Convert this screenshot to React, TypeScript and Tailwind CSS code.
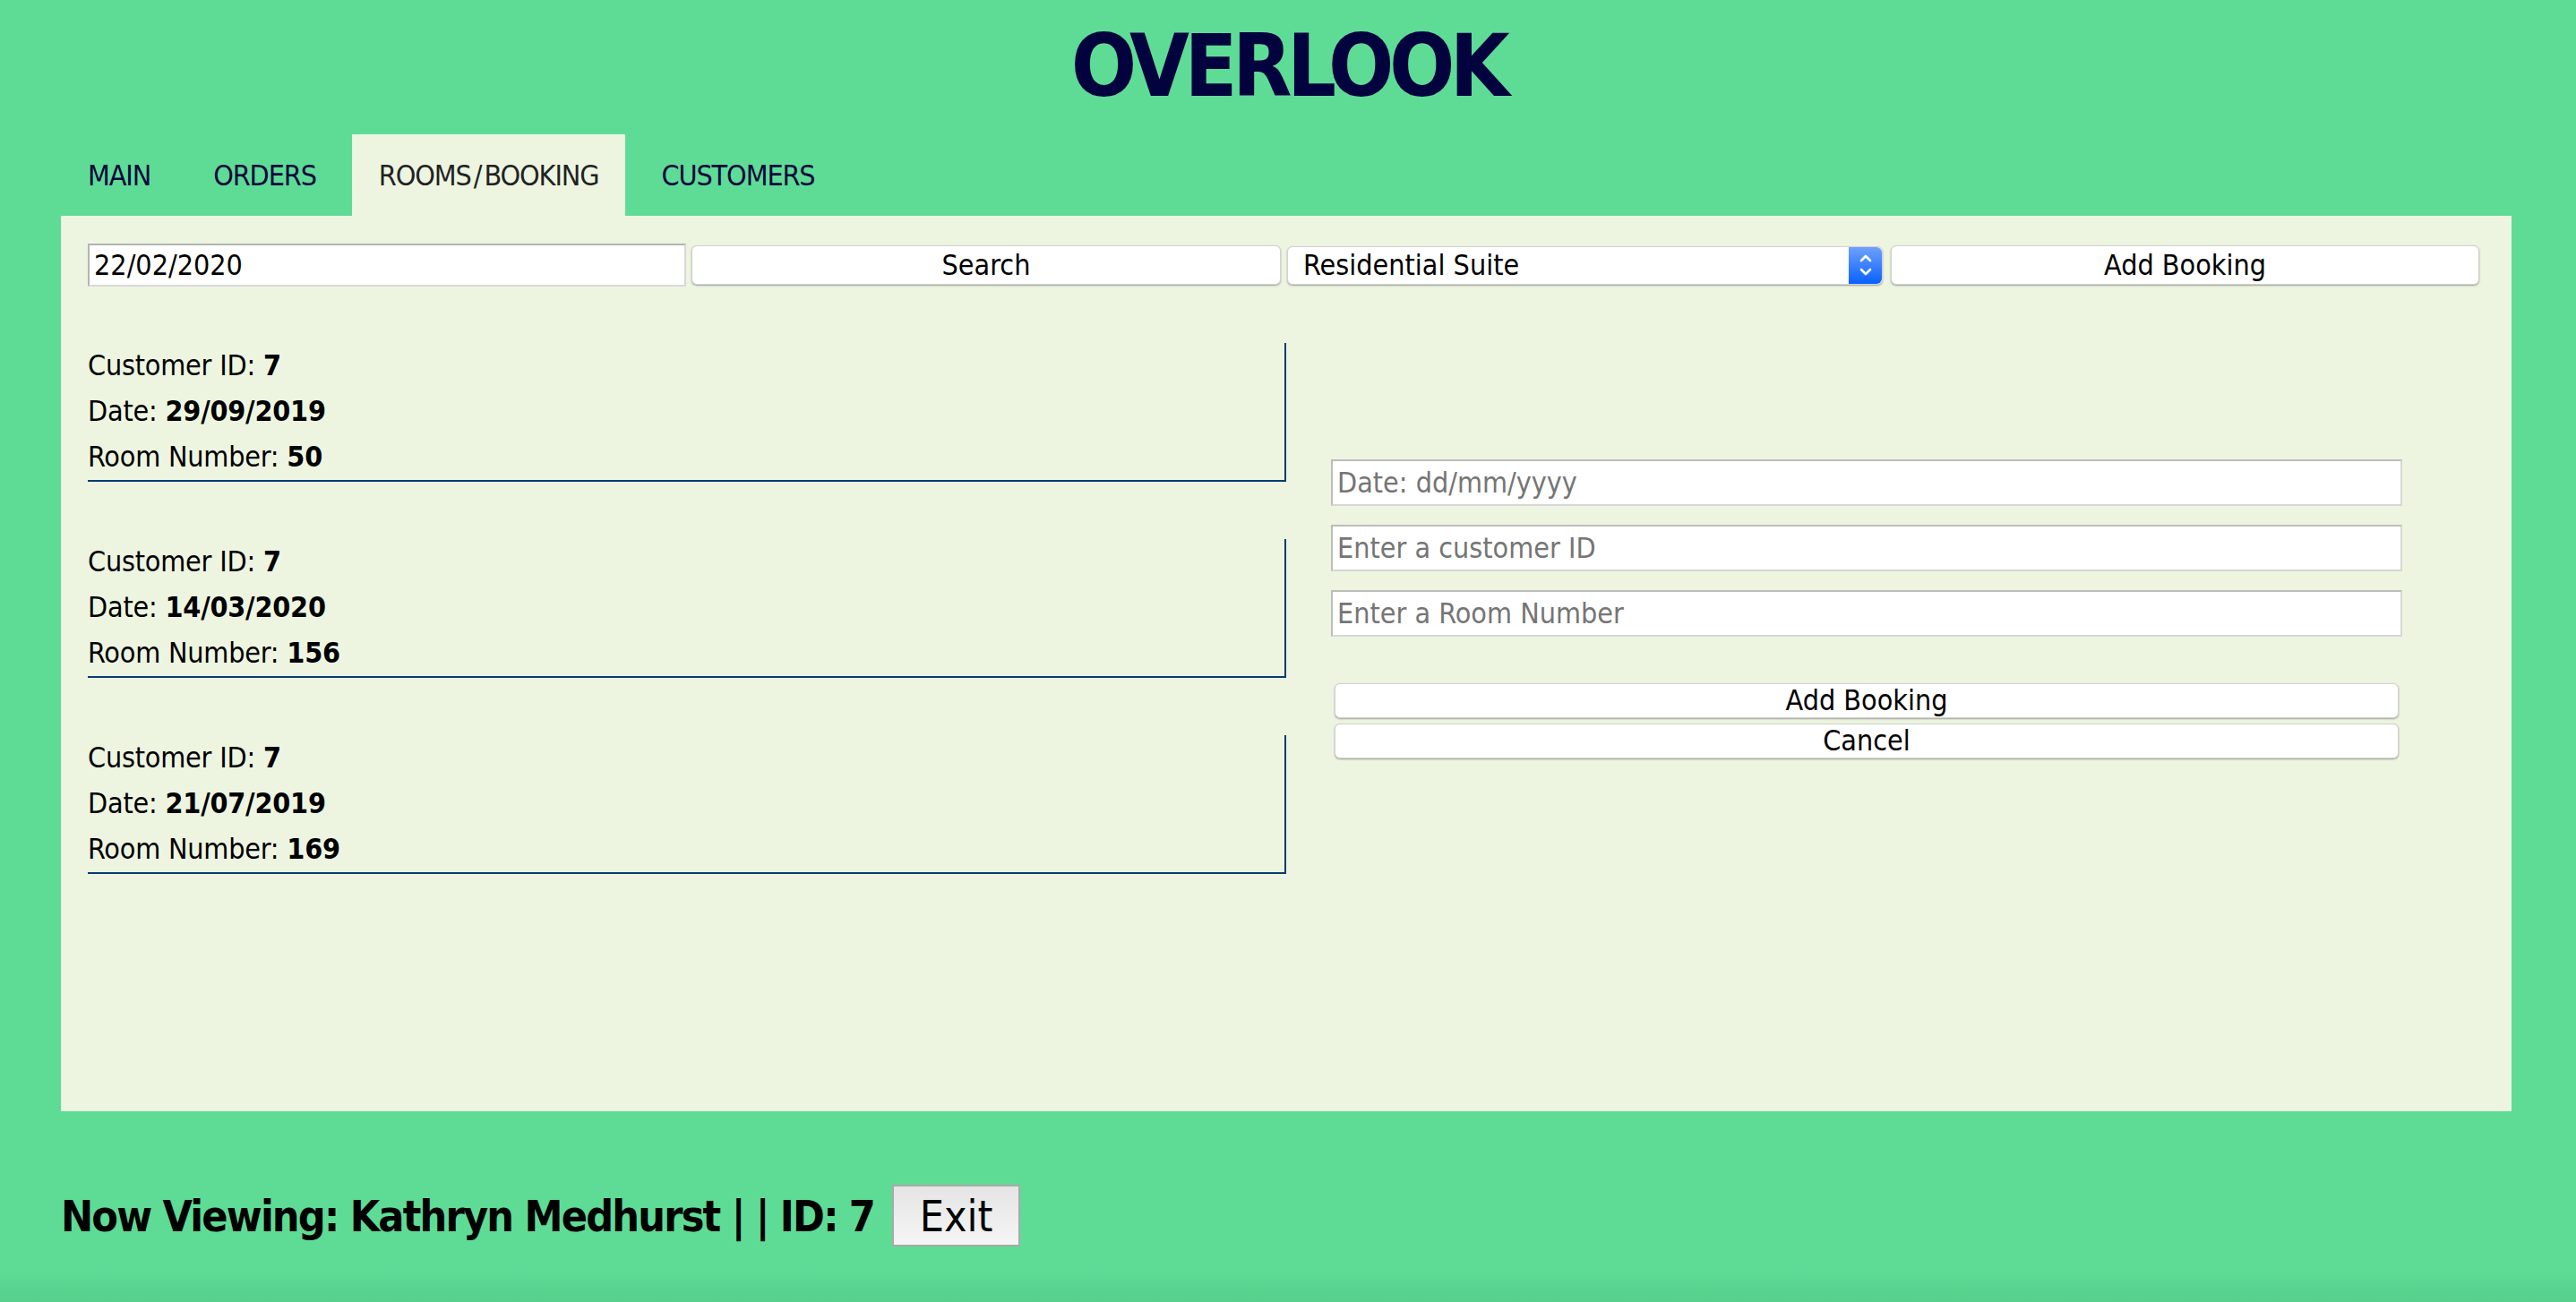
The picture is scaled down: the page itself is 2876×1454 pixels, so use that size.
import React from "react";

const bookings = [
  { id: "7", date: "29/09/2019", room: "50" },
  { id: "7", date: "14/03/2020", room: "156" },
  { id: "7", date: "21/07/2019", room: "169" },
];

function Chevrons() {
  return (
    <svg width="16" height="30" viewBox="0 0 16 30" fill="none" stroke="white" strokeWidth="2.6" strokeLinecap="round" strokeLinejoin="round">
      <path d="M3 10 L8 5 L13 10" />
      <path d="M3 20 L8 25 L13 20" />
    </svg>
  );
}

export default function App() {
  return (
    <div className="min-h-[1454px] w-[2876px] bg-[linear-gradient(to_bottom,#5edc96_0%,#5edc96_97.5%,#55cf8b_100%)] font-['DejaVu_Sans_Condensed','DejaVu_Sans',sans-serif] font-stretch-condensed text-black">
      <h1 className="pt-[18px] text-center text-[96px] font-bold leading-[112px] tracking-[-5.5px] text-[#02023f]">OVERLOOK</h1>

      <nav className="ml-[68px] mt-[20px] flex h-[91px] items-stretch gap-[10px] text-[32px] tracking-[-1.1px] text-[#05053d]">
        <div className="flex items-center px-[30px]">MAIN</div>
        <div className="flex items-center px-[30px]">ORDERS</div>
        <div className="flex items-center bg-[#edf5e1] px-[30px] text-[#222222]">
          ROOMS<span className="px-[3px]">/</span>BOOKING
        </div>
        <div className="flex items-center px-[30px]">CUSTOMERS</div>
      </nav>

      <main className="ml-[68px] h-[1000px] w-[2736px] bg-[#edf5e1] px-[30px] pt-[31px]">
        <div className="flex h-[48px] items-center text-[32px]">
          <div className="flex h-[48px] w-[668px] items-center border-2 border-t-[#b4b4b4] border-l-[#b4b4b4] border-r-[#d8d8d8] border-b-[#d8d8d8] bg-white px-[5px] leading-none">
            22/02/2020
          </div>
          <button className="ml-[6px] h-[44px] w-[658px] rounded-[6px] border border-[#d2d2d2] bg-white leading-none shadow-[0_1px_2px_rgba(0,0,0,0.35)]">
            Search
          </button>
          <div className="ml-[7px] flex h-[43px] w-[665px] items-center rounded-[6px] border border-[#d2d2d2] bg-white shadow-[0_1px_2px_rgba(0,0,0,0.35)]">
            <span className="flex-1 pl-[17px] leading-none">Residential Suite</span>
            <span className="flex h-full w-[37px] items-center justify-center rounded-r-[6px] bg-[linear-gradient(to_bottom,#6fa0ff,#0861ff)]">
              <Chevrons />
            </span>
          </div>
          <button className="ml-[9px] h-[44px] w-[657px] rounded-[6px] border border-[#d2d2d2] bg-white leading-none shadow-[0_1px_2px_rgba(0,0,0,0.35)]">
            Add Booking
          </button>
        </div>

        <div className="mt-[63px] flex items-center">
          <div className="flex w-[1338px] flex-col gap-[64px]">
            {bookings.map((b, i) => (
              <div key={i} className="border-b-2 border-r-2 border-[#073b6f] text-[32px] leading-[51px] tracking-[-0.2px]">
                <p>
                  Customer ID: <b>{b.id}</b>
                </p>
                <p>
                  Date: <b>{b.date}</b>
                </p>
                <p>
                  Room Number: <b>{b.room}</b>
                </p>
              </div>
            ))}
          </div>

          <div className="ml-[50px] flex w-[1196px] flex-col text-[32px]">
            <div className="flex h-[52px] items-center border-2 border-t-[#bcbcbc] border-l-[#bcbcbc] border-r-[#d6d6d6] border-b-[#d6d6d6] bg-white px-[5px] leading-none text-[#757575]">
              Date: dd/mm/yyyy
            </div>
            <div className="mt-[21px] flex h-[52px] items-center border-2 border-t-[#bcbcbc] border-l-[#bcbcbc] border-r-[#d6d6d6] border-b-[#d6d6d6] bg-white px-[5px] leading-none text-[#757575]">
              Enter a customer ID
            </div>
            <div className="mt-[21px] flex h-[52px] items-center border-2 border-t-[#bcbcbc] border-l-[#bcbcbc] border-r-[#d6d6d6] border-b-[#d6d6d6] bg-white px-[5px] leading-none text-[#757575]">
              Enter a Room Number
            </div>
            <button className="mx-[4px] mt-[52px] h-[39px] rounded-[6px] border border-[#d2d2d2] bg-white leading-none shadow-[0_1px_2px_rgba(0,0,0,0.35)]">
              Add Booking
            </button>
            <button className="mx-[4px] mt-[6px] h-[39px] rounded-[6px] border border-[#d2d2d2] bg-white leading-none shadow-[0_1px_2px_rgba(0,0,0,0.35)]">
              Cancel
            </button>
          </div>
        </div>
      </main>

      <footer className="ml-[68px] mt-[82px] flex h-[69px] items-center">
        <span className="text-[48px] font-bold leading-none tracking-[-1.8px]">
          Now Viewing: Kathryn Medhurst |<span className="ml-[13px]">|</span> ID: 7
        </span>
        <button className="ml-[20px] h-[69px] w-[143px] border-2 border-[#aaaaaa] bg-[linear-gradient(to_bottom,#e5e5e5,#f5f5f5)] text-[48px] leading-none">
          Exit
        </button>
      </footer>
    </div>
  );
}
